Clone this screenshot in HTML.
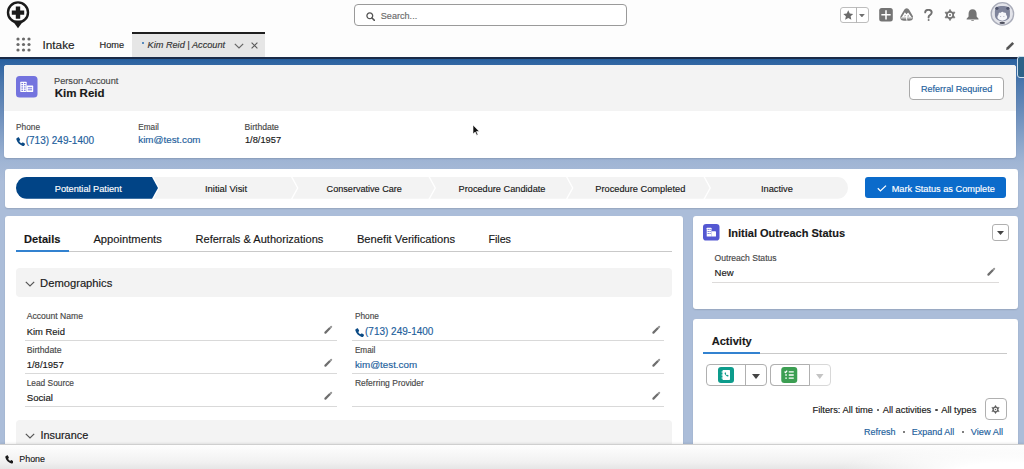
<!DOCTYPE html>
<html><head><meta charset="utf-8">
<style>
*{box-sizing:border-box;margin:0;padding:0}
html,body{width:1024px;height:469px;overflow:hidden}
body{font-family:"Liberation Sans",sans-serif;color:#181818;position:relative;background:#aebfda}
.abs{position:absolute}
.t{position:absolute;white-space:nowrap;-webkit-text-stroke:0.15px currentColor}
.card{position:absolute;background:#fff;border-radius:3px;box-shadow:0 1px 1.5px rgba(0,0,0,0.12)}
</style></head><body>
<div class="abs" style="left:0;top:57px;width:1024px;height:412px;background:linear-gradient(to bottom,#1f4a7c 0px,#2a62a0 3px,#3267a3 8px,#4a77ad 25px,#6589b8 50px,#86a2c8 80px,#a0b5d4 105px,#abbdd9 125px,#abbdd9 412px)"></div>
<div class="abs" style="left:0;top:0;width:1024px;height:57px;background:#fdfdfd"></div>
<div class="abs" style="left:0;top:57px;width:1024px;height:2px;background:#1a2b48"></div>
<svg class="abs" style="left:0;top:0" width="36" height="30" viewBox="0 0 36 30">
 <path d="M12.3 20.5L18 28.2l5.7-7.7z" fill="#1b1b1b"/>
 <circle cx="18" cy="12.4" r="10" fill="none" stroke="#1b1b1b" stroke-width="2.4"/>
 <path d="M15.8 6.4h4.4v4h4v4.4h-4v4h-4.4v-4h-4v-4.4h4z" fill="#1b1b1b"/>
</svg>
<div class="abs" style="left:354px;top:4px;width:273px;height:22px;border:1px solid #9a9a9a;border-radius:4px;background:#fff"></div>
<svg class="abs" style="left:365.5px;top:11.5px" width="9" height="9" viewBox="0 0 9 9"><circle cx="3.8" cy="3.8" r="2.9" fill="none" stroke="#555" stroke-width="1.3"/><path d="M6 6l2.4 2.4" stroke="#555" stroke-width="1.5" stroke-linecap="round"/></svg>
<div class="t" style="left:380.80px;top:12px;font-size:9.1px;line-height:9.1px;color:#6b6b6b;">Search...</div>
<div class="abs" style="left:840px;top:6.5px;width:28.5px;height:16.5px;border:1px solid #bdbdbd;border-radius:3px;background:#fff"></div>
<div class="abs" style="left:856px;top:6.5px;width:1px;height:16.5px;background:#b5b5b5"></div>
<svg class="abs" style="left:843.2px;top:9.6px" width="10.5" height="10.5" viewBox="0 0 24 24"><path d="M12 .8l3.4 7.3 7.9.9-5.9 5.4 1.7 7.9L12 18.3l-7.1 4 1.7-7.9L.7 9l7.9-.9z" fill="#6a6a6a"/></svg>
<svg class="abs" style="left:859.4px;top:14px" width="5.8" height="3.4" viewBox="0 0 6 3.5"><path d="M0 0h6L3 3.5z" fill="#707070"/></svg>
<svg class="abs" style="left:879px;top:8px" width="14" height="13.6" viewBox="0 0 14 14"><rect width="14" height="14" rx="2.6" fill="#747474"/><path d="M6.2 2.2h1.6v4h4v1.6h-4v4H6.2v-4h-4V6.2h4z" fill="#fff"/></svg>
<svg class="abs" style="left:899.8px;top:8.3px" width="13.4" height="12.8" viewBox="0 0 13.4 12.8"><path d="M6.7.2C5.6.2 4.9.9 4.1 2.1L1 7.3C.3 8.5 0 9.4.4 10.6c.5 1.5 1.9 2.2 3.5 2.2h5.6c1.6 0 3-.7 3.5-2.2.4-1.2.1-2.1-.6-3.3L9.3 2.1C8.5.9 7.8.2 6.7.2z" fill="#7a7a7a"/><path d="M1.8 9.2L4.9 4.3l1.5 2 1.7-1.7 3.5 4.6z" fill="#fff"/><path d="M4 8.6l1.1-1.9.9 1.2z M7 8.6l1.2-1.9 1.1 1.9z" fill="#9a9a9a"/><path d="M.8 9.9h11.8" stroke="#fff" stroke-width=".9"/><path d="M6.9 7.5l-.5 2.5.6 2.8" stroke="#fff" stroke-width=".9" fill="none"/></svg>
<svg class="abs" style="left:924px;top:9px" width="9" height="12" viewBox="0 0 9 12"><path d="M1.2 3.4C1.2 1.8 2.6.8 4.4.8c1.9 0 3.3 1.1 3.3 2.7 0 1.4-.9 2-1.8 2.6-.8.5-1.3.9-1.3 2v.4" stroke="#707070" stroke-width="1.9" fill="none" stroke-linecap="round"/><circle cx="4.6" cy="10.9" r="1" fill="#777"/></svg>
<svg class="abs" style="left:944.3px;top:9.3px" width="12" height="12" viewBox="0 0 12 12"><path d="M6 .4L10.9 8.8H1.1z M6 11.6L1.1 3.2h9.8z" fill="#747474" stroke="#747474" stroke-width=".8" stroke-linejoin="round"/><circle cx="6" cy="6" r="3.6" fill="#747474"/><circle cx="6" cy="6" r="2.3" fill="#fff"/><circle cx="6" cy="6" r="1" fill="#747474"/></svg>
<svg class="abs" style="left:965.5px;top:8.6px" width="13.2" height="12.6" viewBox="0 0 13 12.5"><path d="M6.5.3C4 .3 2.5 2.3 2.5 4.6v2.8L.6 9.6c-.3.4 0 .9.5.9h10.8c.5 0 .8-.5.5-.9l-1.9-2.2V4.6C10.5 2.3 9 .3 6.5.3z" fill="#747474"/><path d="M5.2 11.1h2.6a1.3 1.3 0 0 1-2.6 0z" fill="#747474"/></svg>
<svg class="abs" style="left:989.5px;top:1.5px" width="25" height="24" viewBox="0 0 25 24"><circle cx="12.4" cy="11.9" r="11.2" fill="#e3e4ea" stroke="#a9acb9" stroke-width="1.3"/><path d="M4.9 9.2C4.9 5.2 7.8 3.9 12.4 3.9S19.9 5.2 19.9 9.2V13c0 4-3.4 6.2-7.5 6.2S4.9 17 4.9 13z" fill="#7f849b"/><circle cx="6.9" cy="6.3" r="1.6" fill="#4f546c"/><circle cx="17.9" cy="6.3" r="1.6" fill="#4f546c"/><ellipse cx="12.3" cy="15" rx="4.9" ry="3.7" fill="#f5f6fa"/><circle cx="10" cy="11.9" r="1.5" fill="#f5f6fa"/><circle cx="12.4" cy="11.3" r="1.6" fill="#f5f6fa"/><circle cx="14.7" cy="11.9" r="1.5" fill="#f5f6fa"/><circle cx="10.7" cy="14.6" r=".5" fill="#9a9fb3"/><circle cx="13.9" cy="14.6" r=".5" fill="#9a9fb3"/><ellipse cx="12.2" cy="20.9" rx="2.8" ry="1.1" fill="#4d4f5c"/></svg>
<svg class="abs" style="left:16px;top:37px" width="15" height="15" viewBox="0 0 15 15"><g fill="#6a6a6a"><circle cx="2" cy="2" r="1.6"/><circle cx="7.5" cy="2" r="1.6"/><circle cx="13" cy="2" r="1.6"/><circle cx="2" cy="7.5" r="1.6"/><circle cx="7.5" cy="7.5" r="1.6"/><circle cx="13" cy="7.5" r="1.6"/><circle cx="2" cy="13" r="1.6"/><circle cx="7.5" cy="13" r="1.6"/><circle cx="13" cy="13" r="1.6"/></g></svg>
<div class="t" style="left:42.50px;top:40px;font-size:11.8px;line-height:11.8px;color:#222;">Intake</div>
<div class="t" style="left:99.50px;top:41px;font-size:9.2px;line-height:9.2px;color:#222;">Home</div>
<div class="abs" style="left:132px;top:32px;width:133px;height:25px;background:#e6e6e6;border-top:2px solid #1f1f1f"></div>
<div class="abs" style="left:142px;top:41.5px;width:2.2px;height:2.2px;border-radius:50%;background:#2a6cb0"></div>
<div class="t" style="left:147.50px;top:41px;font-size:9.2px;line-height:9.2px;color:#333;font-style:italic;">Kim Reid | Account</div>
<svg class="abs" style="left:234px;top:42.5px" width="10" height="6" viewBox="0 0 10 6"><path d="M.8.8l4.2 4.2L9.2.8" stroke="#666" stroke-width="1.2" fill="none"/></svg>
<svg class="abs" style="left:251px;top:42px" width="7" height="7" viewBox="0 0 7 7"><path d="M.6.6l5.8 5.8M6.4.6L.6 6.4" stroke="#5a5a5a" stroke-width="1.1"/></svg>
<svg class="abs" style="left:1005px;top:41px" width="10" height="10" viewBox="0 0 10 10"><path d="M1 9l.6-2.4L7.3.9l1.8 1.8L3.4 8.4z" fill="#555"/></svg>
<div class="abs" style="left:1016.5px;top:55.5px;width:10px;height:22px;border:1.5px solid #cfe0ef;border-radius:3px;background:#2d6288"></div>
<div class="card" style="left:4px;top:65px;width:1012px;height:92.7px;overflow:hidden"><div class="abs" style="left:0;top:0;width:1012px;height:46px;background:#f3f3f3"></div></div>
<svg class="abs" style="left:16px;top:76px" width="21.5" height="21.5" viewBox="0 0 21 21"><rect width="21" height="21" rx="3.5" fill="#7373de"/><g fill="#fff"><rect x="4.2" y="5.6" width="6.2" height="10" rx=".4"/><rect x="10.4" y="9.4" width="6.4" height="6.2" rx=".4"/></g><g fill="#7373de"><rect x="5.3" y="6.8" width="1.6" height="1.1"/><rect x="7.8" y="6.8" width="1.6" height="1.1"/><rect x="5.3" y="9" width="1.6" height="1.1"/><rect x="7.8" y="9" width="1.6" height="1.1"/><rect x="5.3" y="11.2" width="1.6" height="1.1"/><rect x="7.8" y="11.2" width="1.6" height="1.1"/><rect x="5.3" y="13.4" width="1.6" height="1.1"/><rect x="7.8" y="13.4" width="1.6" height="1.1"/><rect x="11.5" y="11" width="4.2" height="1"/><rect x="11.5" y="13" width="4.2" height="1"/></g></svg>
<div class="t" style="left:54.00px;top:77px;font-size:9.2px;line-height:9.2px;color:#474747;">Person Account</div>
<div class="t" style="left:54.70px;top:88px;font-size:11.5px;line-height:11.5px;color:#181818;font-weight:bold;">Kim Reid</div>
<div class="abs" style="left:909px;top:77px;width:95px;height:22.5px;border:1px solid #a9a9a9;border-radius:4px;background:#fff"></div>
<div class="t" style="left:921.00px;top:85px;font-size:9.05px;line-height:9.05px;color:#22609c;">Referral Required</div>
<div class="t" style="left:16.00px;top:123px;font-size:8.3px;line-height:8.3px;color:#474747;">Phone</div>
<div class="t" style="left:138.30px;top:124px;font-size:8.2px;line-height:8.2px;color:#474747;">Email</div>
<div class="t" style="left:244.50px;top:123px;font-size:8.6px;line-height:8.6px;color:#474747;">Birthdate</div>
<svg class="abs" style="left:16px;top:136.5px" width="9" height="9" viewBox="0 0 9 9"><path d="M2 .5c.4-.3.9-.2 1.1.2l.9 1.6c.2.4.1.8-.2 1.1l-.6.5c.5 1 1.3 1.9 2.3 2.4l.5-.6c.3-.3.8-.4 1.1-.2l1.6.9c.4.2.5.7.2 1.1l-.6.9c-.4.5-1 .7-1.6.5C3.6 8 1.1 5.5.4 2.6.2 2 .4 1.4.9 1z" fill="#0b4a85"/></svg>
<div class="t" style="left:25.70px;top:136px;font-size:10px;line-height:10px;color:#22609c;">(713) 249-1400</div>
<div class="t" style="left:138.30px;top:135px;font-size:9.8px;line-height:9.8px;color:#22609c;">kim@test.com</div>
<div class="t" style="left:244.90px;top:136px;font-size:9.3px;line-height:9.3px;color:#181818;">1/8/1957</div>
<svg class="abs" style="left:472px;top:124px" width="8" height="12" viewBox="0 0 8 12"><path d="M1 1v9l2.2-2 1.5 3.3 1.3-.6-1.5-3.2H7.3z" fill="#111" stroke="#fff" stroke-width=".6"/></svg>
<div class="card" style="left:4.5px;top:168.5px;width:1013.5px;height:39px"></div>
<svg class="abs" style="left:0;top:176.8px" width="860" height="21.8" viewBox="0 0 860 21" preserveAspectRatio="none"><path d="M26.5 0H152l6 10.5-6 10.5H26.5A10.5 10.5 0 0 1 26.5 0z" fill="#014486"/><path d="M153.5 0H291l6 10.5-6 10.5H153.5l6-10.5z" fill="#f3f3f3"/><path d="M292.5 0H428.5l6 10.5-6 10.5H292.5l6-10.5z" fill="#f3f3f3"/><path d="M430.0 0H566l6 10.5-6 10.5H430.0l6-10.5z" fill="#f3f3f3"/><path d="M567.5 0H703.5l6 10.5-6 10.5H567.5l6-10.5z" fill="#f3f3f3"/><path d="M705.0 0H837.5a10.5 10.5 0 0 1 0 21H705.0l6-10.5z" fill="#f3f3f3"/></svg>
<div class="t" style="left:54.80px;top:185px;font-size:9.2px;line-height:9.2px;color:#fff;">Potential Patient</div>
<div class="t" style="left:205.00px;top:184px;font-size:9.4px;line-height:9.4px;color:#181818;">Initial Visit</div>
<div class="t" style="left:326.60px;top:185px;font-size:9.1px;line-height:9.1px;color:#181818;">Conservative Care</div>
<div class="t" style="left:458.60px;top:185px;font-size:9.2px;line-height:9.2px;color:#181818;">Procedure Candidate</div>
<div class="t" style="left:595.30px;top:185px;font-size:9.25px;line-height:9.25px;color:#181818;">Procedure Completed</div>
<div class="t" style="left:761.00px;top:185px;font-size:9.25px;line-height:9.25px;color:#181818;">Inactive</div>
<div class="abs" style="left:865px;top:177.2px;width:141px;height:21px;background:#0b6bcb;border-radius:3px"></div>
<svg class="abs" style="left:876.5px;top:185px" width="10" height="7" viewBox="0 0 10 7"><path d="M.8 3.3l2.6 2.6L9 .6" stroke="#fff" stroke-width="1.3" fill="none"/></svg>
<div class="t" style="left:891.70px;top:185px;font-size:9.2px;line-height:9.2px;color:#fff;">Mark Status as Complete</div>
<div class="card" style="left:4.5px;top:216px;width:678.5px;height:253px"></div>
<div class="t" style="left:24.10px;top:234px;font-size:11.07px;line-height:11.07px;color:#181818;font-weight:bold;">Details</div>
<div class="t" style="left:93.40px;top:234px;font-size:11.2px;line-height:11.2px;color:#181818;">Appointments</div>
<div class="t" style="left:195.50px;top:234px;font-size:11.07px;line-height:11.07px;color:#181818;">Referrals &amp; Authorizations</div>
<div class="t" style="left:356.90px;top:234px;font-size:11.2px;line-height:11.2px;color:#181818;">Benefit Verifications</div>
<div class="t" style="left:488.40px;top:234px;font-size:10.7px;line-height:10.7px;color:#181818;">Files</div>
<div class="abs" style="left:16px;top:250.5px;width:656px;height:1px;background:#c9c9c9"></div>
<div class="abs" style="left:16px;top:249.5px;width:53px;height:2px;background:#3282d0"></div>
<div class="abs" style="left:16px;top:268px;width:656px;height:29px;background:#f3f3f3;border-radius:4px"></div>
<svg class="abs" style="left:25.3px;top:281px" width="10" height="6" viewBox="0 0 10 6"><path d="M.8.8l4.2 4.2L9.2.8" stroke="#555" stroke-width="1.2" fill="none"/></svg>
<div class="t" style="left:40.10px;top:278px;font-size:11.2px;line-height:11.2px;color:#181818;">Demographics</div>
<div class="t" style="left:26.70px;top:312px;font-size:8.58px;line-height:8.58px;color:#474747;">Account Name</div>
<div class="t" style="left:26.70px;top:327px;font-size:9.43px;line-height:9.43px;color:#181818;">Kim Reid</div>
<div class="abs" style="left:24.5px;top:340px;width:312px;height:1px;background:#d9d9d9"></div>
<svg class="abs" style="left:322.5px;top:325px" width="10" height="10" viewBox="0 0 10 10"><path d="M2.4 7.6L6.7 3.3" stroke="#6e6e6e" stroke-width="2.2" stroke-linecap="round"/><path d="M7.7 2.3l.5-.5" stroke="#999" stroke-width="2" stroke-linecap="round"/></svg>
<div class="abs" style="left:352px;top:340px;width:312px;height:1px;background:#d9d9d9"></div>
<svg class="abs" style="left:650.5px;top:325px" width="10" height="10" viewBox="0 0 10 10"><path d="M2.4 7.6L6.7 3.3" stroke="#6e6e6e" stroke-width="2.2" stroke-linecap="round"/><path d="M7.7 2.3l.5-.5" stroke="#999" stroke-width="2" stroke-linecap="round"/></svg>
<div class="t" style="left:26.70px;top:346px;font-size:8.7px;line-height:8.7px;color:#474747;">Birthdate</div>
<div class="t" style="left:26.70px;top:360px;font-size:9.5px;line-height:9.5px;color:#181818;">1/8/1957</div>
<div class="abs" style="left:24.5px;top:373px;width:312px;height:1px;background:#d9d9d9"></div>
<svg class="abs" style="left:322.5px;top:358px" width="10" height="10" viewBox="0 0 10 10"><path d="M2.4 7.6L6.7 3.3" stroke="#6e6e6e" stroke-width="2.2" stroke-linecap="round"/><path d="M7.7 2.3l.5-.5" stroke="#999" stroke-width="2" stroke-linecap="round"/></svg>
<div class="abs" style="left:352px;top:373px;width:312px;height:1px;background:#d9d9d9"></div>
<svg class="abs" style="left:650.5px;top:358px" width="10" height="10" viewBox="0 0 10 10"><path d="M2.4 7.6L6.7 3.3" stroke="#6e6e6e" stroke-width="2.2" stroke-linecap="round"/><path d="M7.7 2.3l.5-.5" stroke="#999" stroke-width="2" stroke-linecap="round"/></svg>
<div class="t" style="left:26.70px;top:379px;font-size:8.36px;line-height:8.36px;color:#474747;">Lead Source</div>
<div class="t" style="left:26.70px;top:393px;font-size:9.67px;line-height:9.67px;color:#181818;">Social</div>
<div class="abs" style="left:24.5px;top:406px;width:312px;height:1px;background:#d9d9d9"></div>
<svg class="abs" style="left:322.5px;top:391px" width="10" height="10" viewBox="0 0 10 10"><path d="M2.4 7.6L6.7 3.3" stroke="#6e6e6e" stroke-width="2.2" stroke-linecap="round"/><path d="M7.7 2.3l.5-.5" stroke="#999" stroke-width="2" stroke-linecap="round"/></svg>
<div class="abs" style="left:352px;top:406px;width:312px;height:1px;background:#d9d9d9"></div>
<svg class="abs" style="left:650.5px;top:391px" width="10" height="10" viewBox="0 0 10 10"><path d="M2.4 7.6L6.7 3.3" stroke="#6e6e6e" stroke-width="2.2" stroke-linecap="round"/><path d="M7.7 2.3l.5-.5" stroke="#999" stroke-width="2" stroke-linecap="round"/></svg>
<div class="t" style="left:354.90px;top:312px;font-size:8.3px;line-height:8.3px;color:#474747;">Phone</div>
<svg class="abs" style="left:355px;top:328px" width="9" height="9" viewBox="0 0 9 9"><path d="M2 .5c.4-.3.9-.2 1.1.2l.9 1.6c.2.4.1.8-.2 1.1l-.6.5c.5 1 1.3 1.9 2.3 2.4l.5-.6c.3-.3.8-.4 1.1-.2l1.6.9c.4.2.5.7.2 1.1l-.6.9c-.4.5-1 .7-1.6.5C3.6 8 1.1 5.5.4 2.6.2 2 .4 1.4.9 1z" fill="#0b4a85"/></svg>
<div class="t" style="left:365.00px;top:327px;font-size:10px;line-height:10px;color:#22609c;">(713) 249-1400</div>
<div class="t" style="left:354.90px;top:347px;font-size:8.2px;line-height:8.2px;color:#474747;">Email</div>
<div class="t" style="left:354.90px;top:360px;font-size:9.8px;line-height:9.8px;color:#22609c;">kim@test.com</div>
<div class="t" style="left:354.90px;top:379px;font-size:8.5px;line-height:8.5px;color:#474747;">Referring Provider</div>
<div class="abs" style="left:16px;top:420px;width:656px;height:29px;background:#f3f3f3;border-radius:4px"></div>
<svg class="abs" style="left:25.3px;top:433px" width="10" height="6" viewBox="0 0 10 6"><path d="M.8.8l4.2 4.2L9.2.8" stroke="#555" stroke-width="1.2" fill="none"/></svg>
<div class="t" style="left:40.40px;top:430px;font-size:10.9px;line-height:10.9px;color:#181818;">Insurance</div>
<div class="card" style="left:692.5px;top:216px;width:325.5px;height:93.3px"></div>
<svg class="abs" style="left:703.2px;top:224.2px" width="16.5" height="16.5" viewBox="0 0 16 16"><rect width="16" height="16" rx="3" fill="#5458d2"/><g fill="#fff"><rect x="3.6" y="3.6" width="4.6" height="8.6" rx=".4"/><rect x="8.2" y="7" width="4.4" height="5.2" rx=".4"/></g><g fill="#5458d2"><rect x="4.5" y="4.8" width="1.1" height=".9"/><rect x="6.3" y="4.8" width="1.1" height=".9"/><rect x="4.5" y="6.8" width="1.1" height=".9"/><rect x="6.3" y="6.8" width="1.1" height=".9"/><rect x="4.5" y="8.8" width="1.1" height=".9"/><rect x="6.3" y="8.8" width="1.1" height=".9"/></g></svg>
<div class="t" style="left:728.20px;top:228px;font-size:11.03px;line-height:11.03px;color:#181818;font-weight:bold;">Initial Outreach Status</div>
<div class="abs" style="left:992px;top:224px;width:17px;height:17px;border:1px solid #b0b0b0;border-radius:3px;background:#fff"></div>
<svg class="abs" style="left:997px;top:230.5px" width="7" height="4"><path d="M0 0h7L3.5 4z" fill="#444"/></svg>
<div class="t" style="left:714.60px;top:254px;font-size:8.59px;line-height:8.59px;color:#474747;">Outreach Status</div>
<div class="t" style="left:714.60px;top:268px;font-size:9.5px;line-height:9.5px;color:#181818;">New</div>
<svg class="abs" style="left:985.5px;top:266.5px" width="10" height="10" viewBox="0 0 10 10"><path d="M2.4 7.6L6.7 3.3" stroke="#6e6e6e" stroke-width="2.2" stroke-linecap="round"/><path d="M7.7 2.3l.5-.5" stroke="#999" stroke-width="2" stroke-linecap="round"/></svg>
<div class="abs" style="left:712px;top:281.5px;width:287px;height:1px;background:#dddbda"></div>
<div class="card" style="left:692.5px;top:319px;width:325.5px;height:150px"></div>
<div class="t" style="left:711.70px;top:336px;font-size:11.1px;line-height:11.1px;color:#181818;font-weight:bold;">Activity</div>
<div class="abs" style="left:703px;top:352.5px;width:304px;height:1px;background:#c9c9c9"></div>
<div class="abs" style="left:703px;top:352px;width:57px;height:2px;background:#3282d0"></div>
<div class="abs" style="left:706px;top:364px;width:61px;height:21.5px;border:1px solid #b0b0b0;border-radius:4px;background:#fff"></div>
<div class="abs" style="left:745px;top:364px;width:1px;height:21.5px;background:#b0b0b0"></div>
<svg class="abs" style="left:718px;top:367px" width="16" height="16" viewBox="0 0 16 16"><rect width="16" height="16" rx="3" fill="#0d9c8c"/><path d="M5.5 3h5.5c.6 0 1 .4 1 1v8c0 .6-.4 1-1 1H5.5c-.6 0-1-.4-1-1V4c0-.6.4-1 1-1z" fill="#fff"/><path d="M3.5 5h2M3.5 8h2M3.5 11h2" stroke="#fff" stroke-width=".9"/><path d="M7.1 5.4c.2-.1.4 0 .5.1l.5.8c.1.2 0 .4-.1.5l-.3.2c.3.6.7 1 1.3 1.3l.2-.3c.1-.1.3-.2.5-.1l.8.5c.2.1.2.3.1.5l-.3.4c-.2.2-.5.3-.8.2-1.4-.5-2.4-1.5-2.9-2.9-.1-.3 0-.6.2-.8z" fill="#0d9c8c"/></svg>
<svg class="abs" style="left:752px;top:373.5px" width="8" height="5"><path d="M0 0h8L4 5z" fill="#444"/></svg>
<div class="abs" style="left:769.5px;top:364px;width:61px;height:21.5px;border:1px solid #d8d8d8;border-radius:4px;background:#fff"></div>
<div class="abs" style="left:769.5px;top:364px;width:40px;height:21.5px;border:1px solid #b0b0b0;border-radius:4px 0 0 4px"></div>
<svg class="abs" style="left:781px;top:367px" width="16.5" height="16" viewBox="0 0 16 16"><rect width="16" height="16" rx="3" fill="#3b9e52"/><g stroke="#fff" stroke-width="1.3" fill="none"><path d="M3.3 4.6l1 1 1.6-2"/><path d="M7.5 4.8h5M7.5 8h5M7.5 11.2h5M4 8h1.6M4 11.2h1.6"/></g></svg>
<svg class="abs" style="left:816px;top:373.5px" width="7.5" height="5"><path d="M0 0h7.5L3.75 5z" fill="#c4c4c4"/></svg>
<div class="t" style="left:812.50px;top:406px;font-size:9.3px;line-height:9.3px;color:#181818;">Filters: All time</div>
<div class="t" style="left:882.70px;top:406px;font-size:9.3px;line-height:9.3px;color:#181818;">All activities</div>
<div class="t" style="left:941.20px;top:406px;font-size:9.3px;line-height:9.3px;color:#181818;">All types</div>
<div class="abs" style="left:876.8px;top:409px;width:2.2px;height:2.2px;border-radius:50%;background:#444"></div>
<div class="abs" style="left:935.4px;top:409px;width:2.2px;height:2.2px;border-radius:50%;background:#444"></div>
<div class="abs" style="left:984.5px;top:398px;width:22px;height:21.5px;border:1px solid #b0b0b0;border-radius:4px;background:#fff"></div>
<svg class="abs" style="left:991.4px;top:404.6px" width="9" height="9" viewBox="0 0 12 12"><path d="M6 .4L10.9 8.8H1.1z M6 11.6L1.1 3.2h9.8z" fill="#5e5e5e" stroke="#5e5e5e" stroke-width=".6" stroke-linejoin="round"/><circle cx="6" cy="6" r="3.3" fill="#5e5e5e"/><circle cx="6" cy="6" r="2.2" fill="#fff"/><circle cx="6" cy="6" r="1" fill="#5e5e5e"/></svg>
<div class="t" style="left:864.00px;top:428px;font-size:9.03px;line-height:9.03px;color:#22609c;">Refresh</div>
<div class="t" style="left:911.70px;top:428px;font-size:9.0px;line-height:9.0px;color:#22609c;">Expand All</div>
<div class="t" style="left:970.80px;top:428px;font-size:9.25px;line-height:9.25px;color:#22609c;">View All</div>
<div class="abs" style="left:903px;top:431.2px;width:2.2px;height:2.2px;border-radius:50%;background:#555"></div>
<div class="abs" style="left:962px;top:431.2px;width:2.2px;height:2.2px;border-radius:50%;background:#555"></div>
<div class="abs" style="left:0;top:444px;width:1024px;height:25px;background:linear-gradient(to bottom,#fefefe 0px,#fafafa 5px,#f1f1f1 17px,#e4e4e4 25px);border-top:1px solid #cfcfcf;box-shadow:0 -1px 2px rgba(0,0,0,0.08)"></div>
<div class="abs" style="left:0;top:445px;width:1024px;height:24px;background:radial-gradient(ellipse 170px 28px at 1010px 26px,rgba(255,255,255,1) 30%,rgba(255,255,255,0) 100%)"></div>
<svg class="abs" style="left:4.5px;top:455px" width="8.5" height="8.5" viewBox="0 0 9 9"><path d="M2 .5c.4-.3.9-.2 1.1.2l.9 1.6c.2.4.1.8-.2 1.1l-.6.5c.5 1 1.3 1.9 2.3 2.4l.5-.6c.3-.3.8-.4 1.1-.2l1.6.9c.4.2.5.7.2 1.1l-.6.9c-.4.5-1 .7-1.6.5C3.6 8 1.1 5.5.4 2.6.2 2 .4 1.4.9 1z" fill="#1a1a1a"/></svg>
<div class="t" style="left:19.30px;top:455px;font-size:8.9px;line-height:8.9px;color:#181818;">Phone</div>
</body></html>
